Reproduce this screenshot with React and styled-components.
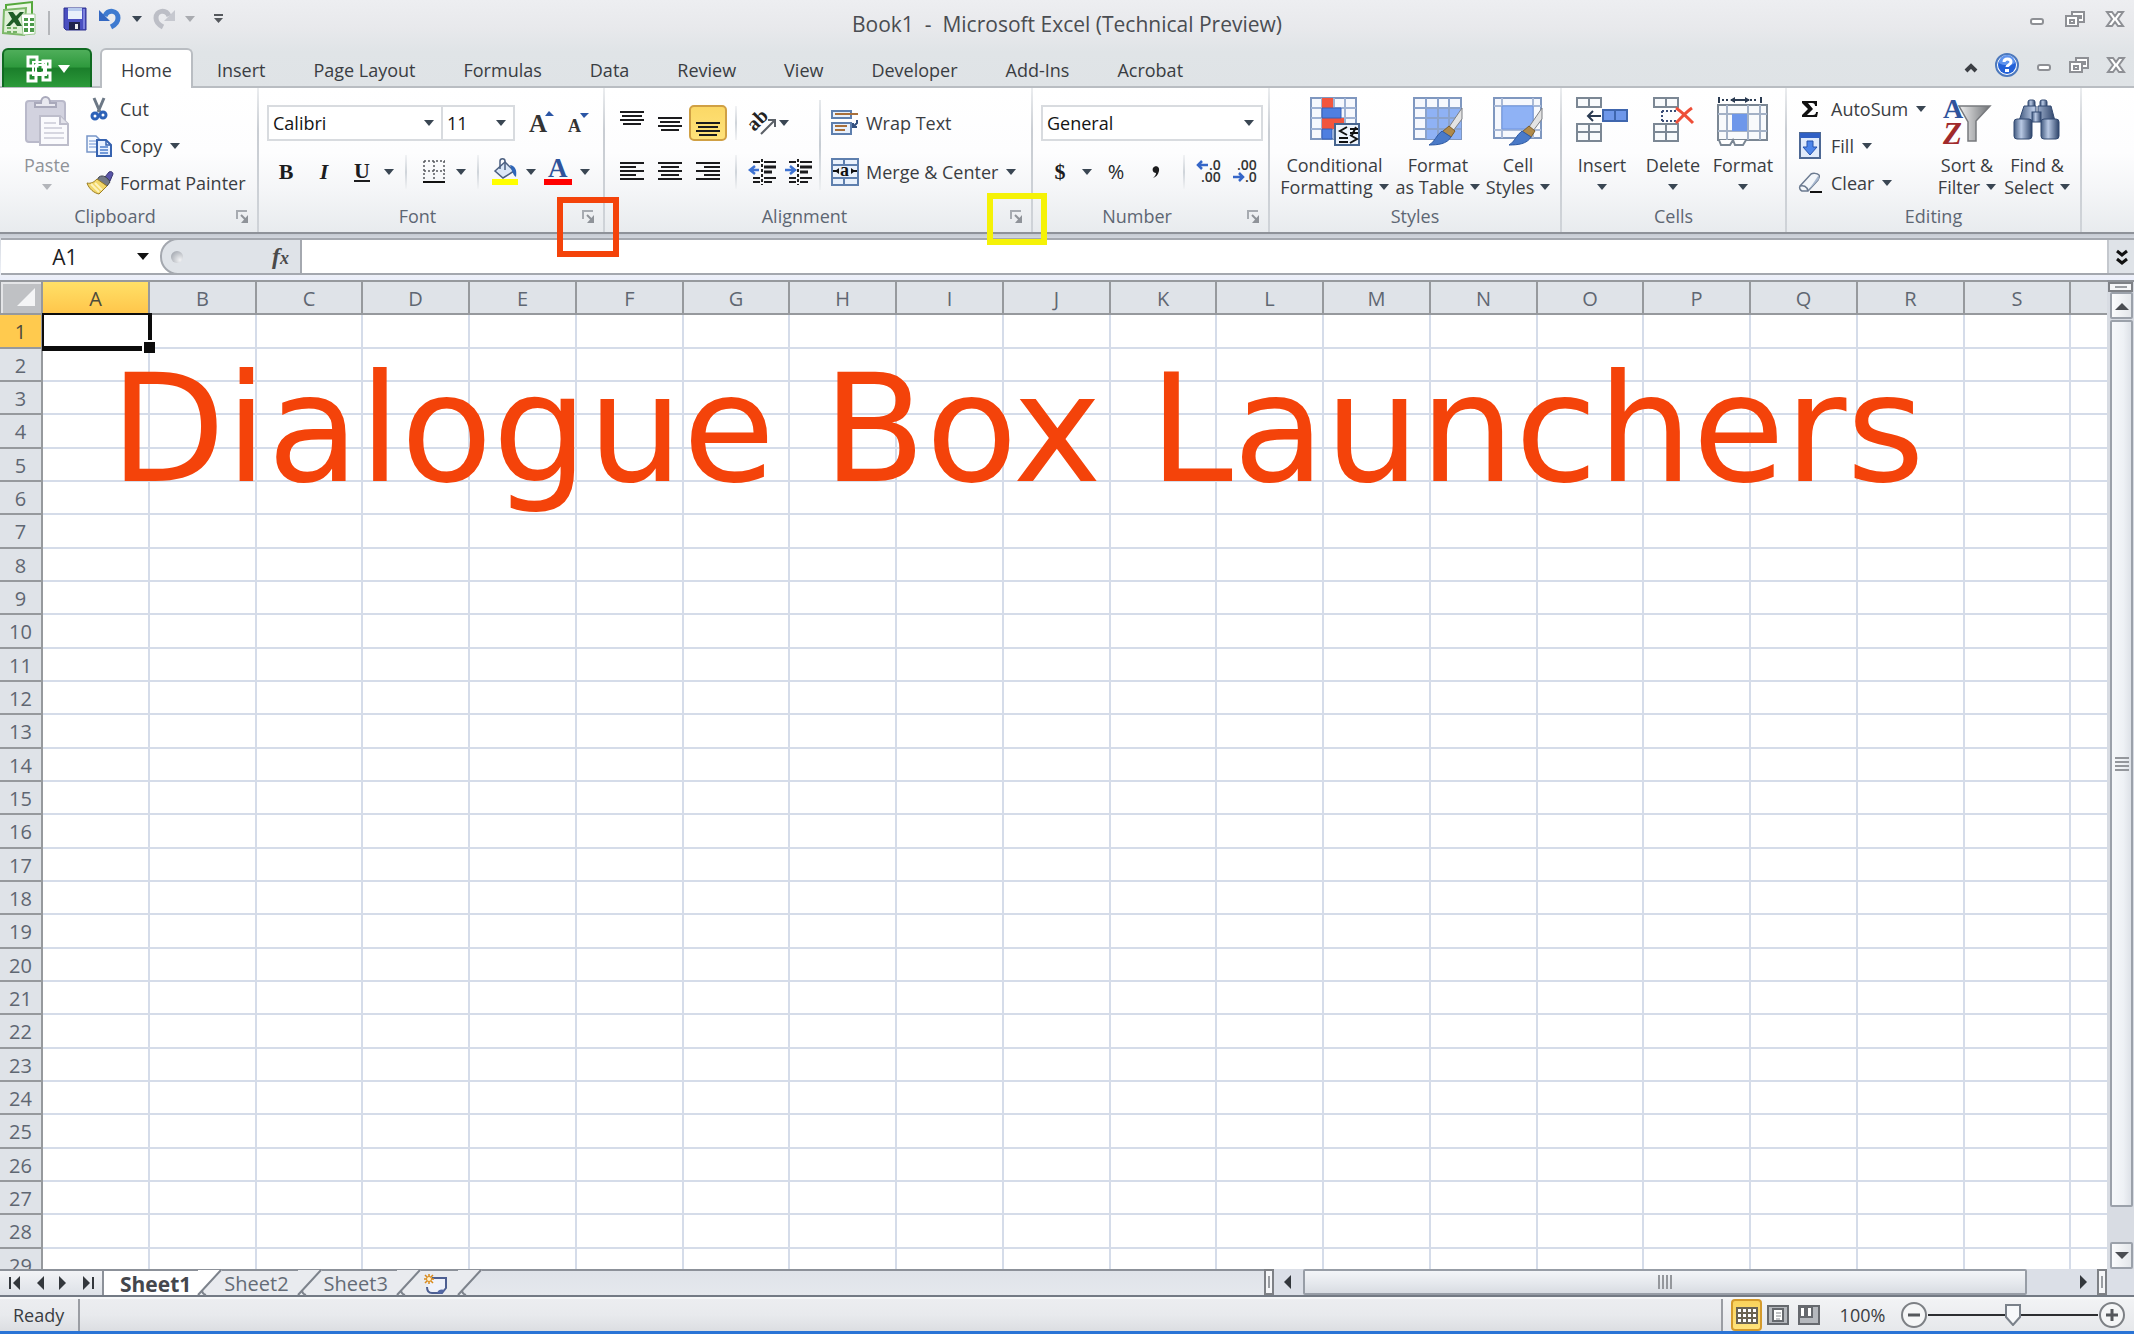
import React from "react";
import styled, { createGlobalStyle, css } from "styled-components";

const ui = `"Open Sans", "Noto Sans", "Liberation Sans", sans-serif`;
const serif = `"Liberation Serif", "DejaVu Serif", serif`;

const GlobalStyle = createGlobalStyle`
  * { box-sizing: border-box; }
  body { margin: 0; font-family: ${ui}; font-size: 18px; color: #3a3d42; overflow: hidden; }
  button, input, select { font: inherit; color: inherit; margin: 0; }
  button { border: 0; padding: 0; background: none; }
`;

const Window = styled.div`
  display: flex;
  flex-direction: column;
  height: 100vh;
  background: #dfe3e8;
`;

const Chrome = styled.header`
  background: linear-gradient(#edeef1 0, #e8e9ec 28px, #e0e4e7 52px, #dfe3e6 100%);
`;

const TitleBar = styled.div`
  display: grid;
  grid-template-columns: 1fr auto 1fr;
  height: 48px;
`;

const TitleText = styled.h1`
  margin: 0;
  font-size: 21px;
  font-weight: 400;
  line-height: 48px;
  white-space: pre;
  color: #4a4d52;
`;

const QuickAccess = styled.div`
  display: flex;
  align-items: center;
  height: 38px;
  padding-left: 2px;
`;

const QuickButton = styled.button`
  display: flex;
  align-items: center;
  justify-content: center;
  width: ${(p) => p.$w}px;
  height: 34px;
`;

const QuickLine = styled.span`
  width: 2px;
  height: 24px;
  margin: 8px 12px 0;
  background: #b4b6ba;
`;

const WindowButtons = styled.div`
  display: flex;
  justify-content: flex-end;
  align-items: center;
  gap: 19px;
  height: 42px;
  padding-right: 9px;
`;

const RibbonTabs = styled.nav`
  display: flex;
  height: 40px;
  border-bottom: 2px solid #b9bdc2;
`;

const FileButton = styled.button`
  display: flex;
  align-items: center;
  justify-content: center;
  gap: 5px;
  width: 90px;
  height: 39px;
  margin: 0 8px 0 2px;
  border: 2px solid #0f6a21;
  border-bottom: 0;
  border-radius: 6px 6px 0 0;
  background: linear-gradient(#4fae5a 0, #2f9a3e 45%, #1b7f2b 50%, #2c9a3a 100%);
`;

const RibbonTab = styled.button`
  height: 40px;
  padding: 2px ${(p) => (p.$active ? 19 : 21)}px 0;
  margin-right: 2px;
  line-height: 34px;
  border: 2px solid transparent;
  border-bottom: 0;
  white-space: nowrap;
  ${(p) =>
    p.$active &&
    css`
      margin-right: 1px;
      border-color: #b9bdc2;
      border-radius: 6px 6px 0 0;
      background: #fff;
    `}
`;

const TabsRight = styled.div`
  display: flex;
  flex: 1;
  align-items: center;
  justify-content: flex-end;
  gap: 16px;
  padding-right: 8px;
`;

const Ribbon = styled.div`
  display: flex;
  height: 144px;
  background: linear-gradient(#fff 0, #fdfdfe 45%, #f4f5f7 72%, #e8ebee 100%);
`;

const Group = styled.section`
  position: relative;
  display: flex;
  flex: none;
  flex-direction: column;
  width: ${(p) => p.$w}px;
  border-right: 2px solid;
  border-image: linear-gradient(#eceef0, #c9cdd3 30%, #cfd3d8) 1;
`;

const GroupBody = styled.div`
  display: flex;
  flex: 1;
  padding-left: ${(p) => p.$left}px;
`;

const GroupFooter = styled.div`
  display: flex;
  align-items: center;
  height: 30px;
`;

const GroupLabel = styled.span`
  flex: 1;
  text-align: center;
  line-height: 26px;
  padding-bottom: 2px;
  color: #5d6673;
`;

const Launcher = styled.button`
  display: flex;
  align-items: center;
  width: 27px;
  height: 26px;
  padding: 0 0 2px 6px;
`;

const Highlight = styled.span`
  position: absolute;
  right: -16px;
  bottom: ${(p) => p.$bottom}px;
  width: ${(p) => p.$w}px;
  height: ${(p) => p.$h}px;
  border: 6px solid ${(p) => p.$color};
  pointer-events: none;
  z-index: 5;
`;

const BigButton = styled.button`
  display: flex;
  flex-direction: column;
  align-items: center;
  width: ${(p) => p.$w}px;
  padding-top: 8px;
  line-height: 22px;
  color: ${(p) => (p.$dim ? "#8f9298" : "inherit")};
  white-space: nowrap;

  > svg { margin-bottom: 8px; }
`;

const BigLine = styled.span`
  display: flex;
  align-items: center;
  gap: 6px;
  height: 22px;
`;

const Commands = styled.div`
  display: flex;
  flex-direction: column;
  padding-top: ${(p) => p.$top || 2}px;
  width: ${(p) => (p.$w ? p.$w + "px" : "auto")};
`;

const Command = styled.button`
  display: flex;
  align-items: center;
  gap: 8px;
  height: ${(p) => p.$h || 37}px;
  white-space: nowrap;
`;

const CommandIcon = styled.span`
  display: flex;
  justify-content: center;
  width: 26px;
`;

const Rows = styled.div`
  display: flex;
  flex-direction: column;
  padding-top: 10px;
`;

const Row = styled.div`
  display: flex;
  align-items: center;
  height: 49px;
`;

const Tool = styled.button`
  display: flex;
  align-items: center;
  justify-content: center;
  gap: 3px;
  width: ${(p) => p.$w || 38}px;
  height: 36px;
  ${(p) =>
    p.$on &&
    css`
      border: 2px solid #d0a044;
      border-radius: 5px;
      background: linear-gradient(#fbd866, #ffe27a);
    `}
`;

const Letter = styled.span`
  font-family: ${serif};
  font-size: 22px;
  font-weight: 700;
  color: #1c1c1e;
  font-style: ${(p) => (p.$italic ? "italic" : "normal")};
  border-bottom: ${(p) => (p.$under ? "2px solid #1c1c1e" : "0")};
  line-height: ${(p) => (p.$under ? 19 : 24)}px;
`;

const Percent = styled.span`
  font-size: 20px;
  color: #26282b;
`;

const Sep = styled.span`
  width: 2px;
  height: 34px;
  margin: 0 8px;
  background: linear-gradient(#f2f3f5, #cfd4da, #f2f3f5);
`;

const TallSep = styled.span`
  width: 2px;
  height: 90px;
  margin: 12px 11px 0 2px;
  background: linear-gradient(#e6e9ec, #c6ccd3, #eef0f2);
`;

const Combo = styled.span`
  position: relative;
  display: flex;
  align-items: center;
  width: ${(p) => p.$w}px;
  height: 36px;
  border: 2px solid #d8dbdf;
  background: #fff;
  margin-left: ${(p) => (p.$join ? -2 : 0)}px;
  margin-right: ${(p) => (p.$join ? 8 : 0)}px;

  svg { position: absolute; right: 7px; pointer-events: none; }
`;

const ComboSelect = styled.select`
  appearance: none;
  width: 100%;
  height: 32px;
  padding: 0 4px;
  border: 0;
  background: transparent;
  color: #141414;
`;

const FormulaBar = styled.div`
  display: flex;
  height: 50px;
  padding: 0 0 0 1px;
  border-top: 2px solid #8e9299;
  border-bottom: 2px solid #8f9399;
  background: linear-gradient(#c5cad2 0, #d5d9e0 5px, #eef1f8 40px, #eaeefa 100%);
`;

const BarInner = styled.div`
  display: flex;
  flex: 1;
  height: 37px;
  margin-top: 4px;
  border-top: 2px solid #a4a8af;
  border-bottom: 2px solid #a4a8af;
  background: #fff;
`;

const NameBox = styled.label`
  display: flex;
  align-items: center;
  width: 159px;

  svg { flex: none; }
`;

const NameInput = styled.input`
  width: 136px;
  padding: 0;
  text-align: center;
  padding-right: 8px;
  border: 0;
  outline: 0;
  background: transparent;
  font-size: 21px;
  color: #1d1d1f;
`;

const FxArea = styled.div`
  display: flex;
  align-items: center;
  justify-content: space-between;
  width: 142px;
  height: 37px;
  margin-top: -2px;
  padding: 0 11px 0 9px;
  border: 2px solid #a4a8af;
  border-radius: 18px 0 0 18px;
  background: #dfe3e8;
`;

const Knob = styled.span`
  width: 12px;
  height: 12px;
  border-radius: 50%;
  background: radial-gradient(circle at 75% 75%, #f1f2f4, #9fa4ac 90%);
`;

const FxButton = styled.button`
  font-family: ${serif};
  font-style: italic;
  font-weight: 700;
  font-size: 24px;
  line-height: 28px;
  color: #4a4a4a;

  small { font-size: 18px; }
`;

const FormulaInput = styled.input`
  flex: 1;
  border: 0;
  outline: 0;
  padding: 0 8px;
  background: #fff;
`;

const ExpandButton = styled.button`
  display: flex;
  align-items: center;
  justify-content: center;
  width: 27px;
  border-left: 2px solid #c4c8ce;
  background: #dfe3e8;
`;

const Work = styled.main`
  display: flex;
  flex: 1;
  min-height: 0;
  background: #fff;
`;

const SheetArea = styled.div`
  position: relative;
  flex: 1;
  min-width: 0;
  overflow: hidden;
  margin-top: -2px;
`;

const Grid = styled.table`
  table-layout: fixed;
  width: 2178px;
  border-collapse: separate;
  border-spacing: 0;
`;

const HeadCol = styled.col`
  width: ${(p) => p.$w}px;
`;

const ColumnHead = styled.th`
  height: 35px;
  padding: 2px 0 0;
  border: solid #96999d;
  border-width: 2px 2px 2px 0;
  background: ${(p) => (p.$on ? "linear-gradient(#ffe067, #ffc64b)" : "#dfe3e8")};
  font-size: 20px;
  font-weight: 400;
  line-height: 28px;
  color: ${(p) => (p.$on ? "#4c4a3c" : "#5f6772")};
`;

const Corner = styled.th`
  height: 35px;
  padding: 0;
  border: solid #96999d;
  border-width: 2px 2px 2px 1px;
  background: #bfc1c4;
  box-shadow: inset 2px 2px #e4e5e7;

  svg { display: block; margin-left: 14px; }
`;

const RowHead = styled.th`
  padding: 2px 0 0;
  border: solid #96999d;
  border-width: 0 2px 2px 0;
  background: ${(p) => (p.$on ? "#ffca4e" : "#dfe3e8")};
  font-size: 20px;
  font-weight: 400;
  line-height: 28px;
  color: ${(p) => (p.$on ? "#4c4a3c" : "#5f6772")};
`;

const SheetRow = styled.tr`
  height: 33px;
  &:nth-child(3n + 1) { height: 34px; }
`;

const Cell = styled.td`
  position: relative;
  padding: 0;
  border: solid #d5dce9;
  border-width: 0 2px 2px 0;
`;

const Selection = styled.span`
  position: absolute;
  inset: -2px -4px -4px -1px;
  border: solid #0c0c0c;
  border-width: 2px 4px 5px 2px;
  z-index: 1;

  &::after {
    content: "";
    position: absolute;
    right: -7px;
    bottom: -7px;
    width: 11px;
    height: 11px;
    border: solid #fff;
    border-width: 2px 0 0 2px;
    background: #0c0c0c;
  }
`;

const Caption = styled.p`
  position: absolute;
  left: 110px;
  top: 62px;
  margin: 0;
  font-family: "DejaVu Sans", sans-serif;
  font-size: 150px;
  line-height: 174px;
  white-space: nowrap;
  color: #f4430a;
  z-index: 2;
`;

const VScroll = styled.div`
  display: flex;
  flex-direction: column;
  width: 27px;
  padding: 0 1px 0 3px;
  background: #d8dce3;
`;

const SplitHandle = styled.span`
  flex: none;
  display: flex;
  align-items: center;
  justify-content: center;
  width: ${(p) => (p.$v ? "10px" : "auto")};
  height: ${(p) => (p.$v ? "26px" : "10px")};
  margin-left: ${(p) => (p.$v ? 0 : -2)}px;
  border: 2px solid #7e8186;
  background: #f5f6f8;

  &::before {
    content: "";
    width: ${(p) => (p.$v ? "2px" : "12px")};
    height: ${(p) => (p.$v ? "12px" : "2px")};
    background: #9a9da2;
  }
`;

const ScrollButton = styled.button`
  display: flex;
  align-items: center;
  justify-content: center;
  height: 27px;
  border: 2px solid #9ba1aa;
  border-radius: 2px;
  background: linear-gradient(90deg, #fbfcfd, #e3e6ea);
`;

const VThumb = styled.div`
  display: flex;
  flex: 1;
  align-items: center;
  justify-content: center;
  margin: 1px 0 35px;
  border: 2px solid #9ba1aa;
  border-radius: 2px;
  background: linear-gradient(90deg, #f6f8fa, #eef1f5 60%, #dde1e7);
`;

const BottomBar = styled.div`
  display: flex;
  height: 28px;
  border-top: 2px solid #8c9199;
  border-bottom: 2px solid #737a84;
  background: linear-gradient(#dfe3e9, #e5e8ed);
`;

const SheetNav = styled.div`
  display: flex;
  align-items: center;
  width: 104px;
  padding: 0 3px 0 4px;
  border-right: 2px solid #8c9199;
  background: linear-gradient(#f2f3f6, #dde1e7);
`;

const NavButton = styled.button`
  display: flex;
  justify-content: center;
  flex: 1;
`;

const SheetTab = styled.button`
  position: relative;
  display: flex;
  align-items: center;
  height: 24px;
  margin-left: ${(p) => (p.$on ? 0 : -23)}px;
  padding: 1px ${(p) => (p.$on ? 31 : 33)}px 0 ${(p) => (p.$on ? 16 : 25)}px;
  z-index: ${(p) => p.$z};
  font-size: ${(p) => (p.$on ? 21 : 20)}px;
  line-height: 22px;
  font-weight: ${(p) => (p.$on ? 700 : 400)};
  color: ${(p) => (p.$on ? "#44474d" : "#646b76")};

  &::before {
    content: "";
    position: absolute;
    inset: 0 23px 0 0;
    background: ${(p) => (p.$on ? "#fff" : "#e9ebef")};
    z-index: -1;
  }
`;

const Slope = styled.svg`
  position: absolute;
  right: 0;
  top: -1px;
  overflow: visible;
`;

const HScroll = styled.div`
  display: flex;
  flex: none;
  width: 870px;
  margin-top: -2px;
  background: #dbdfe7;
`;

const HArrow = styled.button`
  display: flex;
  align-items: center;
  justify-content: center;
  width: ${(p) => p.$w}px;
  padding-right: ${(p) => p.$right || 0}px;
`;

const HThumb = styled.div`
  display: flex;
  flex: 1;
  align-items: center;
  justify-content: center;
  margin-right: 44px;
  border: 2px solid #979da6;
  border-radius: 2px;
  background: linear-gradient(#f3f5f8, #e4e7ec 60%, #d8dce2);
`;

const HCorner = styled.span`
  width: 27px;
`;

const Spacer = styled.span`
  flex: 1;
`;

const StatusBar = styled.footer`
  display: flex;
  align-items: center;
  height: 37px;
  border-top: 2px solid #f6f7f8;
  border-bottom: 3px solid #2a74d6;
  background: linear-gradient(#ecedf0, #e8eaed 50%, #dcdee2);
`;

const StatusText = styled.span`
  width: 80px;
  padding-left: 13px;
  line-height: 32px;
  border-right: 2px solid #9a9da3;
`;

const StatusRight = styled.div`
  display: flex;
  align-items: center;
  height: 32px;
  padding: 0 8px;
  border-left: 2px solid #9a9da3;
  background: linear-gradient(#f2f3f5, #e6e8eb);
`;

const ViewButton = styled.button`
  display: flex;
  align-items: center;
  justify-content: center;
  width: 31px;
  height: 32px;
  ${(p) =>
    p.$on &&
    css`
      border: 2px solid #d49a2c;
      border-radius: 4px;
      background: linear-gradient(#f9d25c, #ffe37c);
    `}
`;

const ZoomText = styled.label`
  width: 76px;
  text-align: center;
  padding-left: 1px;
`;

const RoundButton = styled.button`
  display: flex;
`;

const knobArt = encodeURIComponent(
  `<svg xmlns="http://www.w3.org/2000/svg" width="16" height="22"><path d="M1 1h14v12l-7 8-7-8z" fill="#f6f8fa" stroke="#7a818a" stroke-width="2"/></svg>`
);

const ZoomRange = styled.input`
  appearance: none;
  width: 170px;
  height: 24px;
  background: linear-gradient(#2c2e31, #2c2e31) center / 100% 2px no-repeat;

  &::-webkit-slider-thumb {
    appearance: none;
    width: 16px;
    height: 22px;
    background: url("data:image/svg+xml,${knobArt}") no-repeat;
  }
`;

/* ---------- icons ---------- */

const Drawing = styled.svg`
  flex: none;
  overflow: visible;
`;

const Svg = ({ w, h, children, ...rest }) => (
  <Drawing width={w} height={h} viewBox={`0 0 ${w} ${h}`} fill="none" aria-hidden="true" {...rest}>
    {children}
  </Drawing>
);

const Down = ({ color = "#3a4653", w = 10, h = 6 }) => (
  <svg width={w} height={h} viewBox="0 0 10 6" preserveAspectRatio="none" aria-hidden="true">
    <path d="M0 0h10L5 6z" fill={color} />
  </svg>
);

const ExcelIcon = () => (
  <Svg w={34} h={36}>
    <path d="M4 4 30 1v31L4 30z" fill="#eef7e8" stroke="#55a83c" strokeWidth="2" />
    <path d="M2 9 24 7l-2 27L1 32z" fill="#dff0d6" stroke="#7cb868" strokeWidth="2" />
    <path d="M19 13h14v20l-12 1z" fill="#fff" stroke="#9ccb90" />
    <path d="M22 17h4v3h-4zM28 17h4v3h-4zM22 22h4v3h-4zM28 22h4v3h-4zM22 27h4v4h-4zM28 27h4v4h-4z" fill="#4c9a4a" />
    <path d="M6 11h5l3 4 4-4h4l-6 7 4 7h-5l-3-4-4 4H4l6-7z" fill="#1f5e27" />
    <path d="M5 26h4v2H5zM11 26h4v2h-4zM5 30h4v2H5zM11 30h4v2h-4z" fill="#76b267" />
  </Svg>
);

const SaveIcon = () => (
  <Svg w={24} h={24}>
    <path d="M1 1h22v22H3l-2-2z" fill="#4a4fc0" stroke="#2d3190" />
    <path d="M5 1h14v11H5z" fill="#e8f0fb" />
    <path d="M5 1h14v3H5z" fill="#b8cbee" />
    <path d="M6 15h11v8H6z" fill="#20224c" />
    <path d="M12 17h3v5h-3z" fill="#eee" />
    <path d="M20 2h2v20h-2z" fill="#7d82de" />
  </Svg>
);

const UndoIcon = ({ flip }) => (
  <Svg w={22} h={22}>
    <g transform={flip ? "translate(22 0) scale(-1 1)" : undefined}>
      <path d="M6 8C9 1 19 2 19 10c0 4-3 7-7 9" stroke={flip ? "#bcbec6" : "#3f7bd0"} strokeWidth="5" />
      <path d="M0 2v11h11z" fill={flip ? "#c6c8cf" : "#3468c2"} />
    </g>
  </Svg>
);

const CustomizeIcon = () => (
  <Svg w={11} h={10}>
    <path d="M1 1h9" stroke="#55585d" strokeWidth="2" />
    <path d="M1 4h9L5.500 9z" fill="#55585d" />
  </Svg>
);

const MinimizeIcon = () => (
  <Svg w={16} h={18}>
    <rect x="2" y="9" width="12" height="5" rx="2" fill="#fff" stroke="#8e9095" strokeWidth="2" />
  </Svg>
);

const RestoreIcon = () => (
  <Svg w={22} h={18}>
    <path d="M8 2h12v10H8z" fill="#fff" stroke="#8e9095" strokeWidth="2" />
    <path d="M2 6h12v10H2z" fill="#fff" stroke="#8e9095" strokeWidth="2" />
    <path d="M6 10h4v3H6zM15 6h2v2h-2z" stroke="#8e9095" strokeWidth="2" />
  </Svg>
);

const CloseIcon = () => (
  <Svg w={20} h={18}>
    <path d="M2 2h5l3 4 3-4h5l-5 7 5 7h-5l-3-4-3 4H2l5-7z" fill="#fff" stroke="#8e9095" strokeWidth="2" />
  </Svg>
);

const CaretUpIcon = () => (
  <Svg w={14} h={12}>
    <path d="M2 9l5-5 5 5" stroke="#3c3f44" strokeWidth="4" />
  </Svg>
);

const HelpIcon = () => (
  <Svg w={26} h={26}>
    <circle cx="13" cy="13" r="11" fill="#fff" stroke="#4d79bd" strokeWidth="2" />
    <circle cx="13" cy="13" r="9" fill="#2462d8" />
    <path d="M5 11a8 8 0 0 1 16 0c-4 3-12 3-16 0z" fill="#5f94ee" />
    <path d="M10 10c0-4 7-4 7 0 0 3-4 3-4 5" stroke="#fff" strokeWidth="3" />
    <path d="M11 17h4v3h-4z" fill="#fff" />
  </Svg>
);

const OfficeIcon = () => (
  <Svg w={28} h={30}>
    <g stroke="#fff" strokeWidth="3">
      <path d="M3 3h9v9H3z" />
      <path d="M3 19h8v8H3zM18 19h7v7h-7zM18 7h7v6h-7z" />
      <path d="M8 8h13v13H8z" strokeWidth="2" />
      <path d="M11 11h8v8h-8z" strokeWidth="2" />
    </g>
  </Svg>
);

const PasteIcon = () => (
  <Svg w={44} h={50}>
    <rect x="1" y="5" width="39" height="41" rx="3" fill="#d2d2df" stroke="#b9b9ca" strokeWidth="2" />
    <path d="M10 11V7h6c0-8 9-8 9 0h6v4z" fill="#e9e9f0" stroke="#a9a9bb" strokeWidth="2" />
    <path d="M15 20h20l8 8v21H15z" fill="#fafafd" stroke="#bdbdcb" strokeWidth="2" />
    <path d="M35 20v8h8" fill="#e2e2ea" stroke="#bdbdcb" strokeWidth="2" />
    <path d="M19 27h12M19 32h18M19 37h20M19 42h20" stroke="#d6d6e0" strokeWidth="2" />
  </Svg>
);

const CutIcon = () => (
  <Svg w={18} h={24}>
    <path d="M4 1l6 14M14 1L8 15" stroke="#6c7886" strokeWidth="3" />
    <circle cx="5" cy="19" r="3" stroke="#2d62b8" strokeWidth="3" />
    <circle cx="13" cy="18" r="3" stroke="#2d62b8" strokeWidth="3" />
  </Svg>
);

const CopyIcon = () => (
  <Svg w={26} h={22}>
    <path d="M1 1h9l4 4v12H1z" fill="#f5f9ff" stroke="#7795c8" strokeWidth="1.500" />
    <path d="M3 6h7M3 9h8M3 12h8" stroke="#6f93d4" />
    <path d="M11 5h9l5 5v11H11z" fill="#e7f0ff" stroke="#3763b0" strokeWidth="2" />
    <path d="M20 5v5h5" stroke="#3763b0" strokeWidth="1.500" />
    <path d="M14 12h8M14 15h8M14 18h8" stroke="#4d7dcc" strokeWidth="1.500" />
  </Svg>
);

const PainterIcon = () => (
  <Svg w={26} h={24}>
    <path d="M19 6l4-5c2-1 4 0 4 2l-3 7z" fill="#5955a8" stroke="#38356f" />
    <path d="M13 6c4-3 9 1 11 5l-3 4L11 9z" fill="#747a86" stroke="#3e434c" />
    <path d="M11 8l10 7-8 8C8 22 3 18 1 12c4 1 7-1 10-4z" fill="#f2d76a" stroke="#9b7d22" />
    <path d="M5 13l8 8M9 12l7 7" stroke="#fdf3bd" strokeWidth="2" />
  </Svg>
);

const LaunchIcon = () => (
  <Svg w={13} h={13}>
    <path d="M1 9V1h10" stroke="#a7abb1" strokeWidth="2" />
    <path d="M5 5l5 5" stroke="#8f9399" strokeWidth="2" />
    <path d="M12 5v8H5z" fill="#8f9399" />
  </Svg>
);

const GrowIcon = ({ small }) => (
  <Svg w={26} h={26}>
    <text x={small ? 1 : 0} y="22" fontFamily="Liberation Serif, serif" fontWeight="700" fontSize={small ? 18 : 25} fill="#333">A</text>
    {small ? <path d="M13 3h9l-5 5z" fill="#2a55a5" /> : <path d="M16 6h9l-5-5z" fill="#2a55a5" />}
  </Svg>
);

const BorderIcon = () => (
  <Svg w={22} h={24}>
    <path d="M1 1h21M1 11h21M1 1v20M11 1v20M21 1v20" stroke="#55585d" strokeWidth="1.500" strokeDasharray="2 2" />
    <path d="M0 22h22" stroke="#111" strokeWidth="2" />
  </Svg>
);

const FillColorIcon = () => (
  <Svg w={28} h={28}>
    <path d="M4 13L14 4l9 9-11 7z" fill="#dbe7f7" stroke="#4b5f80" strokeWidth="1.500" />
    <path d="M9 11V3c0-3 5-3 5 0v9" stroke="#4b5f80" strokeWidth="1.500" />
    <path d="M19 7c6 1 7 6 6 12-2-1-3-4-4-6z" fill="#2f66b8" />
    <path d="M1 21h26v6H1z" fill="#ffff00" />
  </Svg>
);

const FontColorIcon = () => (
  <Svg w={28} h={28}>
    <text x="4" y="19" fontFamily="Liberation Serif, serif" fontWeight="700" fontSize="27" fill="#2f539b">A</text>
    <path d="M0 21h28v6H0z" fill="#ff0000" />
  </Svg>
);

const LinesIcon = ({ widths, align = "mid", step = 4, shift = 0 }) => (
  <Svg w={24} h={24}>
    {widths.map((w, i) => {
      const x = align === "left" ? 0 : align === "right" ? 24 - w : (24 - w) / 2;
      return <rect key={i} x={x} y={shift + i * step} width={w} height="2" fill="#1b1b1d" />;
    })}
  </Svg>
);

const OrientIcon = () => (
  <Svg w={26} h={26}>
    <g transform="rotate(-45 10 12)">
      <text x="-1" y="15" fontFamily="Liberation Serif, serif" fontWeight="700" fontSize="20" fill="#222">ab</text>
    </g>
    <path d="M11 24L24 11M18 10h7v7" stroke="#5b6067" strokeWidth="2" />
  </Svg>
);

const IndentIcon = ({ more }) => (
  <Svg w={28} h={28}>
    <path d="M13 1v26" stroke="#222" strokeWidth="2" strokeDasharray="3 2" />
    <path d="M4 4h7M4 20h7M4 24h7M15 4h12M15 20h12M15 24h8" stroke="#1b1b1d" strokeWidth="2" />
    <path d="M15 9h12M15 14h8" stroke="#1b1b1d" strokeWidth="3" />
    {more ? (
      <path d="M0 12h9M5 8l5 4-5 4" stroke="#3f73d2" strokeWidth="2.500" />
    ) : (
      <path d="M10 12H2M6 8l-5 4 5 4" stroke="#3f73d2" strokeWidth="2.500" />
    )}
  </Svg>
);

const WrapIcon = () => (
  <Svg w={28} h={28}>
    <path d="M1 2h19v7H1zM1 14h19v11H1z" fill="#e9f1fc" stroke="#5e7fae" strokeWidth="2" />
    <path d="M4 5h23" stroke="#a86f3a" strokeWidth="2" />
    <path d="M4 17h12M4 21h10" stroke="#a86f3a" strokeWidth="2" />
    <path d="M26 11v3l-4 4M22 14v4h4" stroke="#33507f" strokeWidth="2" />
  </Svg>
);

const MergeIcon = () => (
  <Svg w={28} h={28}>
    <path d="M1 1h26v26H1z" fill="#e9f1fc" stroke="#5e7fae" strokeWidth="2" />
    <path d="M1 7h26M1 20h26M13 1v6M13 20v7" stroke="#5e7fae" strokeWidth="2" />
    <path d="M2 13h6M20 13h6" stroke="#111" strokeWidth="2" />
    <path d="M8 10v6l-4-3zM20 10v6l4-3z" fill="#111" />
    <text x="9" y="18" fontFamily="Liberation Serif, serif" fontWeight="700" fontSize="18" fill="#111">a</text>
  </Svg>
);

const DecimalIcon = ({ less }) => (
  <Svg w={28} h={28}>
    <g fontFamily="Open Sans, sans-serif" fontWeight="600" fontSize="14" fill="#333">
      <text x={less ? 5 : 13} y="12">{less ? ".00" : ".0"}</text>
      <text x={less ? 13 : 5} y="24">{less ? ".0" : ".00"}</text>
    </g>
    {less ? (
      <path d="M1 19h9M7 15l4 4-4 4" stroke="#3566c8" strokeWidth="2.500" />
    ) : (
      <path d="M12 7H3M6 3L2 7l4 4" stroke="#3566c8" strokeWidth="2.500" />
    )}
  </Svg>
);

const ConditionalIcon = () => (
  <Svg w={50} h={50}>
    <path d="M1 2h45v41H1z" fill="#f6f8fd" stroke="#7f97bf" strokeWidth="2" />
    <path d="M1 12h45M1 22h45M1 33h45M12 2v41M24 2v41M35 2v41" stroke="#9fb2d3" strokeWidth="2" />
    <path d="M12 2h11v10H12zM12 22h22v11H12z" fill="#f2553d" />
    <path d="M12 12h19v10H12zM12 33h10v10H12z" fill="#4f7fe0" stroke="#3760b6" />
    <path d="M25 28h24v21H25z" fill="#eef4fc" stroke="#47658f" strokeWidth="2" />
    <path d="M37 31l-7 4 7 4M29 42h9M29 46h9M40 33h8M40 37h8M46 31l-4 8M40 39l7 4-7 4" stroke="#111" strokeWidth="2" />
  </Svg>
);

const BrushArt = () => (
  <>
    <path d="M49 12L36 31l4 4 9-12z" fill="#e3e3e3" stroke="#7d7f83" />
    <path d="M36 30l6 5-4 6-9-5z" fill="#b08a4a" stroke="#7b5c28" />
    <path d="M29 35l9 6c-4 7-13 8-22 8 6-3 7-10 13-14z" fill="#4a7ac8" stroke="#2e5aa3" />
  </>
);

const FormatTableIcon = () => (
  <Svg w={50} h={50}>
    <path d="M1 2h47v41H1z" fill="#f6f8fd" stroke="#7f97bf" strokeWidth="2" />
    <path d="M13 12h35v31H13z" fill="#8fb2f5" />
    <path d="M1 12h47M1 22h47M1 33h47M13 2v41M25 2v41M36 2v41" stroke="#8ba3cc" strokeWidth="2" />
    <BrushArt />
  </Svg>
);

const CellStylesIcon = () => (
  <Svg w={50} h={50}>
    <path d="M1 2h47v40H1z" fill="#f6f8fd" stroke="#7f97bf" strokeWidth="2" />
    <path d="M1 10h47M1 34h47M9 2v40M40 2v40" stroke="#a9b9d6" strokeWidth="2" />
    <path d="M9 10h31v23H9z" fill="#8fb2f5" stroke="#6f95e0" />
    <BrushArt />
  </Svg>
);

const InsertCellsIcon = () => (
  <Svg w={52} h={50}>
    <path d="M1 2h24v9H1zM13 2v9M1 28h24v17H1zM13 28v17M1 36h24" fill="#f8fafc" stroke="#7b8794" strokeWidth="2" />
    <path d="M27 14h24v11H27zM39 14v11" fill="#6e97ea" stroke="#3f66ae" strokeWidth="2" />
    <path d="M12 20h13M17 15l-5 5 5 5" stroke="#2b3b52" strokeWidth="2" />
  </Svg>
);

const DeleteCellsIcon = () => (
  <Svg w={42} h={50}>
    <path d="M2 2h24v9H2zM14 2v9M2 28h24v17H2zM14 28v17M2 36h24" fill="#f8fafc" stroke="#7b8794" strokeWidth="2" />
    <path d="M10 15h16M10 25h14M10 15v10" stroke="#3b4e78" strokeWidth="2" strokeDasharray="2 2" />
    <path d="M24 12c6 4 11 9 17 15M40 12c-6 4-10 9-16 15" stroke="#ee4f38" strokeWidth="3" />
  </Svg>
);

const FormatCellsIcon = () => (
  <Svg w={52} h={50}>
    <path d="M2 1v6M44 1v6M14 4h18" stroke="#2b3b52" strokeWidth="2" />
    <path d="M5 4h8M33 4h8" stroke="#2b3b52" strokeWidth="2" strokeDasharray="2 2" />
    <path d="M18 1v6l-5-3zM28 1v6l5-3z" fill="#2b3b52" />
    <path d="M1 9h49v35H1z" fill="#f8fafc" stroke="#7b8794" strokeWidth="2" />
    <path d="M1 18h49M1 35h49M10 9v35M31 9v35M43 9v35" stroke="#a3b1c6" strokeWidth="2" />
    <path d="M15 18h15v17H15z" fill="#6e97ea" />
    <path d="M2 44l2 5h9l3-5 2 5h8l3-5" fill="#fff" stroke="#7b8794" strokeWidth="2" />
  </Svg>
);

const SigmaIcon = () => (
  <Svg w={18} h={18}>
    <path d="M1 1h15v5h-2c0-2-1-3-3-3H7l5 6-6 6h6c2 0 3-1 3-3h2l-1 5H1v-2l6-6-6-6z" fill="#111" />
  </Svg>
);

const FillDownIcon = () => (
  <Svg w={22} h={28}>
    <path d="M1 1h20v25H1z" fill="#dfeafb" stroke="#4d6894" strokeWidth="2" />
    <path d="M1 1h20v5H1z" fill="#2e5fc4" />
    <path d="M8 9h6v6h4l-7 8-7-8h4z" fill="#4c85ea" stroke="#2452ad" />
  </Svg>
);

const EraserIcon = () => (
  <Svg w={24} h={22}>
    <path d="M2 14L13 2c2-1 6-1 8 1 1 1 0 3-1 5L10 19H4c-2-1-3-3-2-5z" fill="#f3f6fa" stroke="#6b7a90" strokeWidth="1.500" />
    <path d="M2 14c3-1 7 0 8 5" stroke="#6b7a90" strokeWidth="1.500" />
    <path d="M10 19L21 7l-1-3" fill="#a9b9d0" />
    <path d="M12 20h12" stroke="#111" strokeWidth="2" />
  </Svg>
);

const SortFilterIcon = () => (
  <Svg w={50} h={50}>
    <defs>
      <linearGradient id="metal"><stop offset="0" stopColor="#f0f0f0" /><stop offset="1" stopColor="#6f7276" /></linearGradient>
    </defs>
    <path d="M17 10h31L34 25v20h-8V26z" fill="url(#metal)" stroke="#77797d" strokeWidth="1.500" />
    <text x="1" y="22" fontFamily="Liberation Serif, serif" fontWeight="700" fontSize="28" fill="#2f539b">A</text>
    <text x="1" y="48" fontFamily="Liberation Serif, serif" fontWeight="700" fontStyle="italic" fontSize="31" fill="#a02a2c">Z</text>
  </Svg>
);

const BinocularsIcon = () => (
  <Svg w={48} h={50}>
    <defs>
      <linearGradient id="barrel">
        <stop offset="0" stopColor="#41597f" /><stop offset="0.400" stopColor="#b9c9e4" /><stop offset="1" stopColor="#2d4369" />
      </linearGradient>
    </defs>
    <g fill="url(#barrel)" stroke="#334a72">
      <rect x="15" y="4" width="7" height="8" rx="2" />
      <rect x="27" y="4" width="7" height="8" rx="2" />
      <path d="M11 10h12v15H6zM25 10h13l4 15H25z" />
      <rect x="1" y="23" width="18" height="20" rx="3" />
      <rect x="28" y="23" width="18" height="20" rx="3" />
      <rect x="19" y="16" width="9" height="10" />
    </g>
  </Svg>
);

const ChevronsIcon = () => (
  <Svg w={14} h={18}>
    <path d="M2 3l5 4 5-4M2 11l5 4 5-4" stroke="#111" strokeWidth="3" />
  </Svg>
);

const TriIcon = ({ dir, bar, size = 14, color = "#33373c" }) => {
  const turn = { left: 0, up: 90, right: 180, down: 270 }[dir];
  return (
    <Svg w={size} h={size} viewBox="0 0 14 14">
      <g transform={`rotate(${turn} 7 7)`}>
        <path d="M11 0v14L4 7z" fill={color} />
        {bar && <path d="M1 1v12" stroke={color} strokeWidth="2" />}
      </g>
    </Svg>
  );
};

const GripIcon = ({ v }) => (
  <Svg w={14} h={14}>
    <path d={v ? "M0 1h14M0 5h14M0 9h14M0 13h14" : "M1 0v14M5 0v14M9 0v14M13 0v14"} stroke="#94979c" strokeWidth="2" />
  </Svg>
);

const NewSheetIcon = () => (
  <Svg w={26} h={22}>
    <path d="M9 5h14v10l-4 5H9c-4 0-5-3-5-6" fill="#eef1fa" stroke="#4d5f92" strokeWidth="2" />
    <path d="M14 20c1-4 5-4 8-3l-4 4z" fill="#5468a5" />
    <path d="M6 1v10M1 6h10M2 2l8 8M10 2l-8 8" stroke="#d98a1d" strokeWidth="1.500" />
    <circle cx="6" cy="6" r="2.500" fill="#fff3cf" stroke="#d98a1d" />
  </Svg>
);

const ViewIcon = ({ kind }) => (
  <Svg w={22} h={20}>
    {kind === "normal" && (
      <path d="M1 3h20v15H1zM1 8h20M1 13h20M6 3v15M11 3v15M16 3v15" fill="#fff" stroke="#6a6352" strokeWidth="2" />
    )}
    {kind === "layout" && (
      <>
        <path d="M1 1h20v18H1z" fill="#b5b8bd" stroke="#66696e" strokeWidth="2" />
        <path d="M6 4h10v12H6z" fill="#fff" stroke="#66696e" strokeWidth="2" />
        <path d="M9 8h5M9 11h5M9 14h4" stroke="#85888d" />
      </>
    )}
    {kind === "break" && (
      <>
        <path d="M1 1h20v18H1z" fill="#b5b8bd" stroke="#66696e" strokeWidth="2" />
        <path d="M2 2h5v10H2zM9 2h5v10H9z" fill="#fff" stroke="#66696e" strokeWidth="2" />
      </>
    )}
  </Svg>
);

const CircleIcon = ({ plus }) => (
  <Svg w={28} h={28}>
    <circle cx="14" cy="14" r="12" fill="#f5f6f7" stroke="#7d8085" strokeWidth="2" />
    <path d={plus ? "M8 14h12M14 8v12" : "M8 14h12"} stroke="#55585c" strokeWidth="3" />
  </Svg>
);

/* ---------- pieces ---------- */

const tabNames = ["Home", "Insert", "Page Layout", "Formulas", "Data", "Review", "View", "Developer", "Add-Ins", "Acrobat"];
const columns = "ABCDEFGHIJKLMNOPQRST".split("");
const rows = Array.from({ length: 29 }, (_, i) => i + 1);

const WindowSet = () => (
  <>
    <button aria-label="Minimize"><MinimizeIcon /></button>
    <button aria-label="Restore"><RestoreIcon /></button>
    <button aria-label="Close"><CloseIcon /></button>
  </>
);

const ArrowTool = ({ label }) => (
  <Tool $w={16} aria-label={label}><Down /></Tool>
);

const Big = ({ w, icon, top, bottom, dim }) => (
  <BigButton $w={w} $dim={dim}>
    {icon}
    <BigLine>{top}</BigLine>
    <BigLine>{bottom}<Down color={dim ? "#b3b5ba" : undefined} /></BigLine>
  </BigButton>
);

const Small = ({ icon, label, arrow, h }) => (
  <Command $h={h}>
    <CommandIcon>{icon}</CommandIcon>
    {label}
    {arrow && <Down />}
  </Command>
);

const RibbonGroup = ({ w, left, label, launcher, highlight, children }) => (
  <Group $w={w}>
    <GroupBody $left={left}>{children}</GroupBody>
    <GroupFooter>
      <GroupLabel>{label}</GroupLabel>
      {launcher && <Launcher aria-label={`${label} settings`}><LaunchIcon /></Launcher>}
    </GroupFooter>
    {highlight}
  </Group>
);

const Tab = ({ label, on, z }) => (
  <SheetTab $on={on} $z={z}>
    {label}
    <Slope width="24" height="25" viewBox="0 0 24 25" aria-hidden="true">
      <path d="M0 0H24L1 25H0z" fill={on ? "#fff" : "#e9ebef"} />
      <path d="M23 0L0 25M4 20c0 3 1 4 4 5" stroke="#7d838c" strokeWidth="2" fill="none" />
    </Slope>
  </SheetTab>
);

export default function App() {
  return (
    <Window>
      <GlobalStyle />
      <Chrome>
        <TitleBar>
          <QuickAccess>
            <ExcelIcon />
            <QuickLine />
            <QuickButton $w={26} aria-label="Save"><SaveIcon /></QuickButton>
            <QuickButton $w={44} aria-label="Undo"><UndoIcon /></QuickButton>
            <QuickButton $w={10} aria-label="Undo list"><Down /></QuickButton>
            <QuickButton $w={43} aria-label="Redo"><UndoIcon flip /></QuickButton>
            <QuickButton $w={10} aria-label="Redo list"><Down color="#a9abb0" /></QuickButton>
            <QuickButton $w={46} aria-label="Customize toolbar"><CustomizeIcon /></QuickButton>
          </QuickAccess>
          <TitleText>{"Book1  -  Microsoft Excel (Technical Preview)"}</TitleText>
          <WindowButtons><WindowSet /></WindowButtons>
        </TitleBar>
        <RibbonTabs>
          <FileButton aria-label="File">
            <OfficeIcon />
            <Svg w={12} h={8}><path d="M0 0h12L6 8z" fill="#fff" /></Svg>
          </FileButton>
          {tabNames.map((name, i) => (
            <RibbonTab key={name} $active={i === 0}>{name}</RibbonTab>
          ))}
          <TabsRight>
            <button aria-label="Collapse ribbon"><CaretUpIcon /></button>
            <button aria-label="Help"><HelpIcon /></button>
            <WindowSet />
          </TabsRight>
        </RibbonTabs>
      </Chrome>

      <Ribbon>
        <RibbonGroup w={259} left={8} label="Clipboard" launcher>
          <Big w={78} icon={<PasteIcon />} top="Paste" dim />
          <Commands>
            <Small icon={<CutIcon />} label="Cut" />
            <Small icon={<CopyIcon />} label="Copy" arrow />
            <Small icon={<PainterIcon />} label="Format Painter" />
          </Commands>
        </RibbonGroup>

        <RibbonGroup w={346} left={8} label="Font" launcher highlight={<Highlight $w={62} $h={60} $bottom={-25} $color="#f4430a" />}>
          <Rows>
            <Row>
              <Combo $w={176}>
                <ComboSelect aria-label="Font name"><option>Calibri</option></ComboSelect>
                <Down />
              </Combo>
              <Combo $w={74} $join>
                <ComboSelect aria-label="Font size"><option>11</option></ComboSelect>
                <Down />
              </Combo>
              <Tool aria-label="Increase font size"><GrowIcon /></Tool>
              <Tool aria-label="Decrease font size"><GrowIcon small /></Tool>
            </Row>
            <Row>
              <Tool><Letter>B</Letter></Tool>
              <Tool><Letter $italic>I</Letter></Tool>
              <Tool><Letter $under>U</Letter></Tool>
              <ArrowTool label="Underline styles" />
              <Sep />
              <Tool aria-label="Borders"><BorderIcon /></Tool>
              <ArrowTool label="Border styles" />
              <Sep />
              <Tool $w={36} aria-label="Fill color"><FillColorIcon /></Tool>
              <ArrowTool label="Fill colors" />
              <Tool aria-label="Font color"><FontColorIcon /></Tool>
              <ArrowTool label="Font colors" />
            </Row>
          </Rows>
        </RibbonGroup>

        <RibbonGroup w={428} left={8} label="Alignment" launcher highlight={<Highlight $w={60} $h={52} $bottom={-13} $color="#f5f207" />}>
          <Rows>
            <Row>
              <Tool aria-label="Top align"><LinesIcon widths={[24, 20, 24, 18]} shift={0} /></Tool>
              <Tool aria-label="Middle align"><LinesIcon widths={[24, 20, 24, 18]} shift={6} /></Tool>
              <Tool $on aria-label="Bottom align"><LinesIcon widths={[24, 20, 24, 18]} shift={11} /></Tool>
              <Sep />
              <Tool $w={48} aria-label="Orientation"><OrientIcon /><Down /></Tool>
            </Row>
            <Row>
              <Tool aria-label="Align left"><LinesIcon align="left" widths={[24, 16, 24, 16, 24]} shift={2} /></Tool>
              <Tool aria-label="Center"><LinesIcon widths={[24, 18, 24, 18, 24]} shift={2} /></Tool>
              <Tool aria-label="Align right"><LinesIcon align="right" widths={[24, 16, 24, 16, 24]} shift={2} /></Tool>
              <Sep />
              <Tool $w={36} aria-label="Decrease indent"><IndentIcon /></Tool>
              <Tool $w={36} aria-label="Increase indent"><IndentIcon more /></Tool>
            </Row>
          </Rows>
          <TallSep />
          <Commands $top={10}>
            <Small h={49} icon={<WrapIcon />} label="Wrap Text" />
            <Small h={49} icon={<MergeIcon />} label="Merge &amp; Center" arrow />
          </Commands>
        </RibbonGroup>

        <RibbonGroup w={237} left={8} label="Number" launcher>
          <Rows>
            <Row>
              <Combo $w={222}>
                <ComboSelect aria-label="Number format"><option>General</option></ComboSelect>
                <Down />
              </Combo>
            </Row>
            <Row>
              <Tool><Letter>$</Letter></Tool>
              <ArrowTool label="Currency list" />
              <Tool $w={42}><Percent>%</Percent></Tool>
              <Tool aria-label="Comma style">
                <Svg w={10} h={14}><path d="M2 3c2-3 7-2 6 3-1 4-3 6-6 7 2-2 3-3 3-5-3 0-4-3-3-5z" fill="#1c1c1e" /></Svg>
              </Tool>
              <Sep />
              <Tool $w={34} aria-label="Increase decimal"><DecimalIcon /></Tool>
              <Tool $w={38} aria-label="Decrease decimal"><DecimalIcon less /></Tool>
            </Row>
          </Rows>
        </RibbonGroup>

        <RibbonGroup w={292} left={5} label="Styles">
          <Big w={119} icon={<ConditionalIcon />} top="Conditional" bottom="Formatting" />
          <Big w={88} icon={<FormatTableIcon />} top="Format" bottom="as Table" />
          <Big w={72} icon={<CellStylesIcon />} top="Cell" bottom="Styles" />
        </RibbonGroup>

        <RibbonGroup w={225} left={5} label="Cells">
          <Big w={70} icon={<InsertCellsIcon />} top="Insert" />
          <Big w={72} icon={<DeleteCellsIcon />} top="Delete" />
          <Big w={68} icon={<FormatCellsIcon />} top="Format" />
        </RibbonGroup>

        <RibbonGroup w={295} left={10} label="Editing">
          <Commands $w={135}>
            <Small icon={<SigmaIcon />} label="AutoSum" arrow />
            <Small icon={<FillDownIcon />} label="Fill" arrow />
            <Small icon={<EraserIcon />} label="Clear" arrow />
          </Commands>
          <Big w={70} icon={<SortFilterIcon />} top="Sort &amp;" bottom="Filter" />
          <Big w={70} icon={<BinocularsIcon />} top="Find &amp;" bottom="Select" />
        </RibbonGroup>
      </Ribbon>

      <FormulaBar>
        <BarInner>
          <NameBox>
            <NameInput aria-label="Name box" defaultValue="A1" />
            <Down w={12} h={7} color="#111" />
          </NameBox>
          <FxArea>
            <Knob />
            <FxButton aria-label="Insert function">f<small>x</small></FxButton>
          </FxArea>
          <FormulaInput aria-label="Formula" />
          <ExpandButton aria-label="Expand formula bar"><ChevronsIcon /></ExpandButton>
        </BarInner>
      </FormulaBar>

      <Work>
        <SheetArea>
          <Grid>
            <colgroup>
              <HeadCol $w={43} />
              {columns.map((c, i) => (
                <HeadCol key={c} $w={i % 4 === 2 ? 106 : 107} />
              ))}
            </colgroup>
            <thead>
              <tr>
                <Corner aria-label="Select all">
                  <Svg w={22} h={24}><path d="M20 2v18H2z" fill="#f4f5f6" /></Svg>
                </Corner>
                {columns.map((c, i) => (
                  <ColumnHead key={c} $on={i === 0} scope="col">{c === "T" ? "" : c}</ColumnHead>
                ))}
              </tr>
            </thead>
            <tbody>
              {rows.map((r) => (
                <SheetRow key={r}>
                  <RowHead $on={r === 1} scope="row">{r}</RowHead>
                  {columns.map((c, i) => (
                    <Cell key={c}>{r === 1 && i === 0 && <Selection />}</Cell>
                  ))}
                </SheetRow>
              ))}
            </tbody>
          </Grid>
          <Caption>Dialogue Box Launchers</Caption>
        </SheetArea>
        <VScroll>
          <SplitHandle />
          <ScrollButton aria-label="Scroll up"><TriIcon dir="up" color="#4a4d52" /></ScrollButton>
          <VThumb><GripIcon v /></VThumb>
          <ScrollButton aria-label="Scroll down"><TriIcon dir="down" color="#4a4d52" /></ScrollButton>
        </VScroll>
      </Work>

      <BottomBar>
        <SheetNav>
          <NavButton aria-label="First sheet"><TriIcon dir="left" bar /></NavButton>
          <NavButton aria-label="Previous sheet"><TriIcon dir="left" /></NavButton>
          <NavButton aria-label="Next sheet"><TriIcon dir="right" /></NavButton>
          <NavButton aria-label="Last sheet"><TriIcon dir="right" bar /></NavButton>
        </SheetNav>
        <Tab label="Sheet1" on z={4} />
        <Tab label="Sheet2" z={3} />
        <Tab label="Sheet3" z={2} />
        <Tab label={<NewSheetIcon />} z={1} />
        <Spacer />
        <HScroll>
          <SplitHandle $v />
          <HArrow $w={29} $right={4} aria-label="Scroll left"><TriIcon dir="left" /></HArrow>
          <HThumb><GripIcon /></HThumb>
          <HArrow $w={26} aria-label="Scroll right"><TriIcon dir="right" /></HArrow>
          <SplitHandle $v />
          <HCorner />
        </HScroll>
      </BottomBar>

      <StatusBar>
        <StatusText>Ready</StatusText>
        <Spacer />
        <StatusRight>
          <ViewButton $on aria-label="Normal"><ViewIcon kind="normal" /></ViewButton>
          <ViewButton aria-label="Page layout"><ViewIcon kind="layout" /></ViewButton>
          <ViewButton aria-label="Page break preview"><ViewIcon kind="break" /></ViewButton>
          <ZoomText htmlFor="zoom">100%</ZoomText>
          <RoundButton aria-label="Zoom out"><CircleIcon /></RoundButton>
          <ZoomRange id="zoom" type="range" min="0" max="200" defaultValue="100" />
          <RoundButton aria-label="Zoom in"><CircleIcon plus /></RoundButton>
        </StatusRight>
      </StatusBar>
    </Window>
  );
}
